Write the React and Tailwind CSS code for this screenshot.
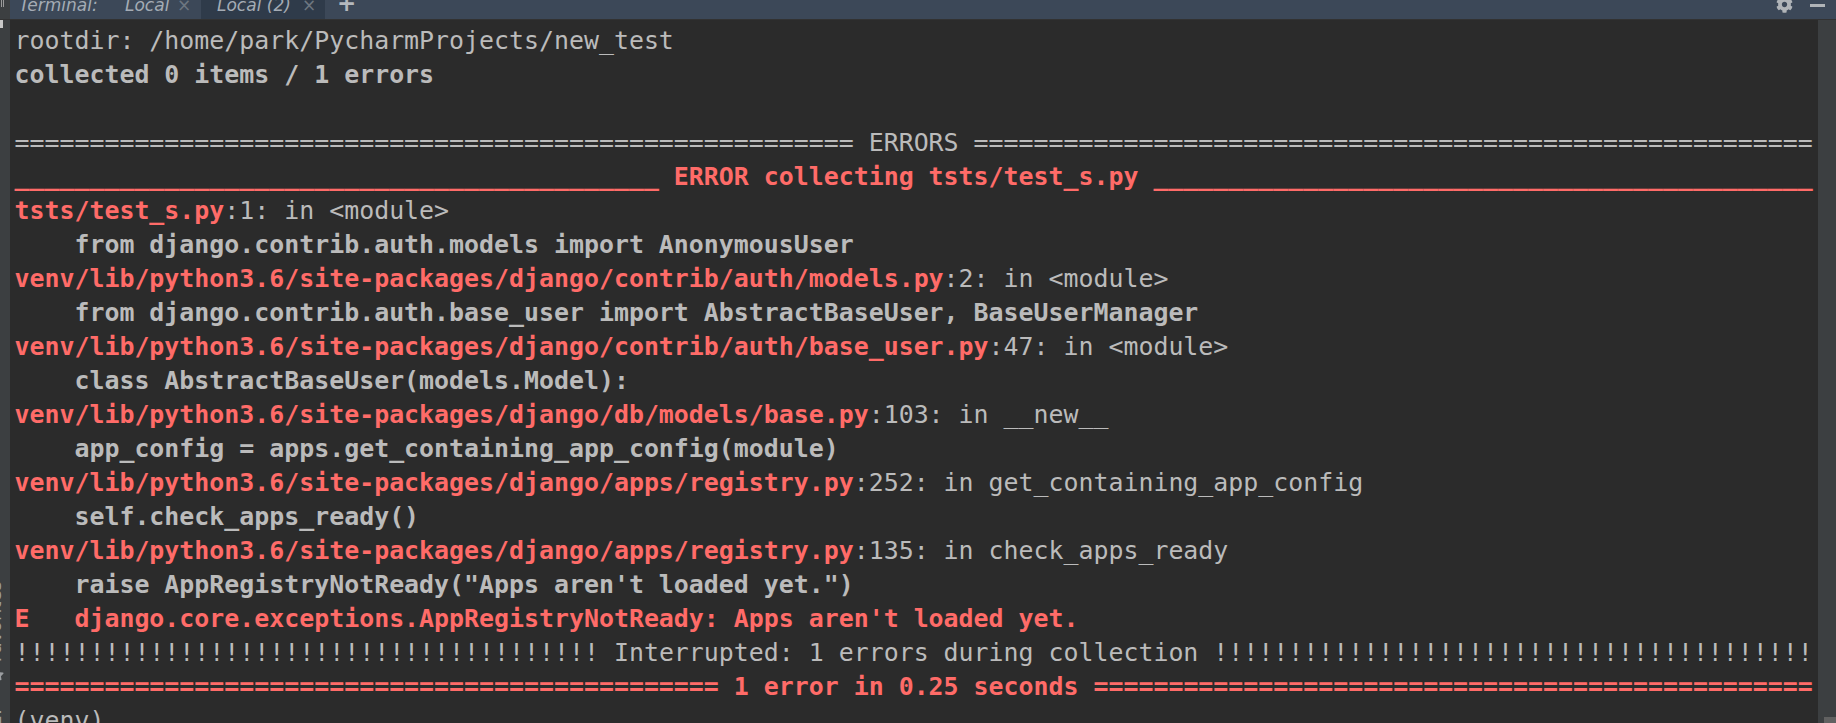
import { FaCog, FaStar } from "react-icons/fa";

const mono = "font-['DejaVu_Sans_Mono',monospace]";
const R = "text-[#ff6b68]";
const eq = (n) => "=".repeat(n);
const us = (n) => "_".repeat(n);

function Row({ children, bold, cls = "" }) {
  return <div className={`h-[34px] whitespace-pre ${bold ? "font-bold" : ""} ${cls}`}>{children}</div>;
}

function Loc({ path, rest }) {
  return (
    <Row>
      <span className={`${R} font-bold`}>{path}</span>
      {rest}
    </Row>
  );
}

export default function App() {
  return (
    <div className="w-[1836px] h-[723px] overflow-hidden flex flex-col bg-[#2b2b2b]">
      <div className="h-[20px] shrink-0 flex overflow-hidden bg-[#3c4858] border-b border-[#323232] font-['DejaVu_Sans',sans-serif] text-[17px] leading-[20px] italic text-[#a4acb5]">
        <div className="w-[10px] shrink-0 bg-[#3c3f41] flex flex-col">
          <div className="h-[7px] w-[3px] ml-[1px] border-x border-[#9a9a9a]" />
        </div>
        <div className="flex items-start -mt-[5px]">
          <span className="ml-[9px] w-[91px]">Terminal:</span>
          <span className="ml-[15px] w-[42px]">Local</span>
          <span className="ml-[10px] w-[24px] not-italic text-[17px] text-[#6d7680]">×</span>
          <div className="h-[26px] w-[124px] flex items-start bg-[#2f3b4a] pl-[16px]">
            <span className="w-[76px]">Local (2)</span>
            <span className="ml-[9px] not-italic text-[#6d7680]">×</span>
          </div>
          <span className="ml-[12px] -mt-[2px] not-italic font-bold text-[23px] text-[#b4b8bd]">+</span>
        </div>
        <div className="ml-auto flex items-start">
          <FaCog size={17} color="#b0b4b8" className="-mt-[4px] mr-[17px]" />
          <div className="w-[15px] h-[3px] mt-[4px] mr-[11px] bg-[#b0b4b8]" />
        </div>
      </div>
      <div className="flex-1 flex min-h-0">
        <div className="w-[10px] shrink-0 bg-[#3c3f41] overflow-hidden flex flex-col justify-between">
          <div className="h-[8px] w-[3px] bg-[#c8c8c8]" />
          <div className="flex flex-col items-start -ml-[14px] -mb-[4px]">
            <span className="[writing-mode:vertical-rl] rotate-180 font-['DejaVu_Sans',sans-serif] text-[18px] leading-[18px] text-[#9a9da0]">Favorites</span>
            <FaStar size={13} color="#9a9da0" className="ml-[5px] mt-[6px]" />
            <span className="[writing-mode:vertical-rl] rotate-180 font-['DejaVu_Sans',sans-serif] text-[18px] leading-[18px] text-[#9a9da0] mt-[28px]">2:</span>
          </div>
        </div>
        <div className={`flex-1 min-w-0 overflow-hidden pl-[4.5px] pt-[4px] ${mono} text-[24.9px] leading-[34px] text-[#bbbbbb]`}>
          <Row>rootdir: /home/park/PycharmProjects/new_test</Row>
          <Row bold>collected 0 items / 1 errors</Row>
          <Row />
          <Row>{eq(56)} ERRORS {eq(56)}</Row>
          <Row bold cls={R}>{us(43)} ERROR collecting tsts/test_s.py {us(44)}</Row>
          <Loc path="tsts/test_s.py" rest=":1: in <module>" />
          <Row bold>{"    from django.contrib.auth.models import AnonymousUser"}</Row>
          <Loc path="venv/lib/python3.6/site-packages/django/contrib/auth/models.py" rest=":2: in <module>" />
          <Row bold>{"    from django.contrib.auth.base_user import AbstractBaseUser, BaseUserManager"}</Row>
          <Loc path="venv/lib/python3.6/site-packages/django/contrib/auth/base_user.py" rest=":47: in <module>" />
          <Row bold>{"    class AbstractBaseUser(models.Model):"}</Row>
          <Loc path="venv/lib/python3.6/site-packages/django/db/models/base.py" rest=":103: in __new__" />
          <Row bold>{"    app_config = apps.get_containing_app_config(module)"}</Row>
          <Loc path="venv/lib/python3.6/site-packages/django/apps/registry.py" rest=":252: in get_containing_app_config" />
          <Row bold>{"    self.check_apps_ready()"}</Row>
          <Loc path="venv/lib/python3.6/site-packages/django/apps/registry.py" rest=":135: in check_apps_ready" />
          <Row bold>{`    raise AppRegistryNotReady("Apps aren't loaded yet.")`}</Row>
          <Row bold cls={R}>{"E   django.core.exceptions.AppRegistryNotReady: Apps aren't loaded yet."}</Row>
          <Row>{"!".repeat(39)} Interrupted: 1 errors during collection {"!".repeat(40)}</Row>
          <Row bold cls={R}>{eq(47)} 1 error in 0.25 seconds {eq(48)}</Row>
          <Row>(venv)</Row>
        </div>
        <div className="w-[18px] shrink-0 bg-[#3c3f41] flex flex-col justify-end">
          <div className="h-[6px] ml-[6px] bg-[#616161]" />
        </div>
      </div>
    </div>
  );
}
